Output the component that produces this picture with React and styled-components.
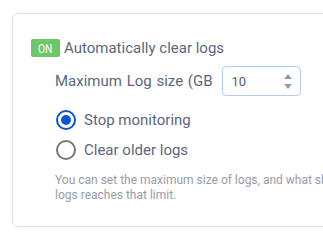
import React, { useState } from "react";
import styled, { createGlobalStyle } from "styled-components";

const GlobalStyle = createGlobalStyle`
  html, body {
    margin: 0;
    padding: 0;
    background: #fff;
    overflow: hidden;
  }
  body {
    font-family: Roboto, "Liberation Sans", sans-serif;
  }
`;

const Card = styled.section`
  margin: 13px 0 0 12px;
  width: 460px;
  height: 214px;
  box-sizing: border-box;
  border: 1px solid #dde0ea;
  border-radius: 6px;
  padding: 25px 0 0 18px;
`;

const Header = styled.div`
  display: flex;
  align-items: center;
  gap: 4px;
  height: 18px;
`;

const Badge = styled.span`
  display: inline-flex;
  align-items: center;
  justify-content: center;
  width: 29px;
  height: 18px;
  border-radius: 2px;
  background: #6dc767;
  color: #fff;
  font-size: 13px;
  span {
    display: inline-block;
    transform: scaleX(0.78);
  }
`;

const Title = styled.span`
  font-size: 15px;
  color: #5d667c;
  line-height: 18px;
`;

const Body = styled.div`
  padding-left: 24px;
`;

const SizeRow = styled.div`
  display: flex;
  align-items: center;
  gap: 9px;
  margin-top: 9px;
  height: 30px;
`;

const Label = styled.span`
  font-size: 15px;
  color: #5d667c;
  word-spacing: 1px;
`;

const NumberBox = styled.div`
  display: flex;
  align-items: center;
  justify-content: space-between;
  width: 79px;
  height: 30px;
  box-sizing: border-box;
  border: 1px solid #b3cbf5;
  border-radius: 4px;
  padding: 0 8px 0 9px;
  font-size: 13px;
  color: #555d70;
`;

const Spin = styled.div`
  display: flex;
  flex-direction: column;
  gap: 5px;
`;

const Arrow = styled.span`
  width: 0;
  height: 0;
  border-left: 4px solid transparent;
  border-right: 4px solid transparent;
  ${(p) =>
    p.$up
      ? "border-bottom: 5px solid #9a9a9a;"
      : "border-top: 5px solid #9a9a9a;"}
`;

const Options = styled.div`
  display: flex;
  flex-direction: column;
  margin-top: 9px;
`;

const Option = styled.label`
  display: flex;
  align-items: center;
  gap: 8px;
  height: 30px;
  font-size: 15px;
  color: #5d667c;
  cursor: pointer;
`;

const Dot = styled.span`
  width: 20px;
  height: 20px;
  margin-left: 1px;
  box-sizing: border-box;
  border-radius: 50%;
  border: 2px solid ${(p) => (p.$on ? "#0b57d0" : "#777")};
  display: flex;
  align-items: center;
  justify-content: center;
  &::after {
    content: "";
    width: 10px;
    height: 10px;
    border-radius: 50%;
    background: ${(p) => (p.$on ? "#0b57d0" : "transparent")};
  }
`;

const Help = styled.p`
  margin: 8px 0 0;
  font-size: 12px;
  line-height: 15px;
  color: #9a9ca3;
  white-space: nowrap;
`;

const options = ["Stop monitoring", "Clear older logs"];

export default function App() {
  const [choice, setChoice] = useState(0);
  return (
    <>
      <GlobalStyle />
      <Card>
        <Header>
          <Badge>
            <span>ON</span>
          </Badge>
          <Title>Automatically clear logs</Title>
        </Header>
        <Body>
          <SizeRow>
            <Label>Maximum Log size (GB</Label>
            <NumberBox>
              10
              <Spin>
                <Arrow $up />
                <Arrow />
              </Spin>
            </NumberBox>
          </SizeRow>
          <Options>
            {options.map((o, i) => (
              <Option key={o} onClick={() => setChoice(i)}>
                <Dot $on={choice === i} />
                {o}
              </Option>
            ))}
          </Options>
          <Help>
            You can set the maximum size of logs, and what should happen when the
            <br />
            logs reaches that limit.
          </Help>
        </Body>
      </Card>
    </>
  );
}
